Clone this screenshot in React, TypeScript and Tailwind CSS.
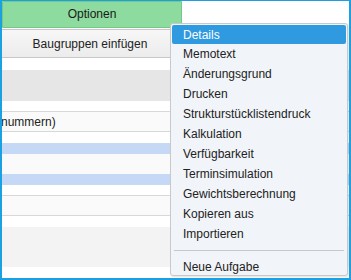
import React from "react";

const items = [
  "Memotext",
  "Änderungsgrund",
  "Drucken",
  "Strukturstücklistendruck",
  "Kalkulation",
  "Verfügbarkeit",
  "Terminsimulation",
  "Gewichtsberechnung",
  "Kopieren aus",
  "Importieren",
];

export default function App() {
  return (
    <div
      className="relative w-[351px] h-[280px] overflow-hidden bg-white border-x-2 border-b-2 border-t border-[#1ba1e2] text-[12px] text-[#222]"
      style={{ fontFamily: '"Liberation Sans", Arial, sans-serif' }}
    >
      <div className="flex flex-col w-[349px]">
        <div className="w-[180px] h-[27px] flex items-center justify-center pb-[1px] bg-[#8ddb9e] border border-[#74c987] rounded-br-sm text-[12px] text-[#1a1a1a]">
          Optionen
        </div>
        <div className="h-[29px] mt-[1px] flex items-center justify-center pr-[2px] w-[190px] bg-gradient-to-b from-[#f7f7f7] to-[#ececec] border-y border-[#c8c8c8] text-[12px]">
          <span className="-ml-[12px]">Baugruppen einfügen</span>
        </div>
        <div className="h-[12px] bg-white" />
        <div className="h-[31px] bg-[#e6e6e6]" />
        <div className="h-[11px] bg-white border-b border-[#d8d8d8]" />
        <div className="h-[20px] bg-[#fafafa] border-b border-[#d8d8d8] flex items-center -ml-[1px]">
          nummern)
        </div>
        <div className="h-[11px] bg-white" />
        <div className="h-[11px] bg-[#c5d8f6]" />
        <div className="h-[20px] bg-[#fafafa]" />
        <div className="h-[11px] bg-[#c5d8f6]" />
        <div className="h-[11px] bg-white border-b border-[#d8d8d8]" />
        <div className="h-[20px] bg-[#fafafa] border-b border-[#d8d8d8]" />
        <div className="h-[11px] bg-white" />
        <div className="h-[40px] bg-[#f3f3f3]" />
        <div className="flex-1 bg-white" />
      </div>

      <div className="absolute left-[168px] top-[22px] w-[178px] h-[253px] bg-[#f1f4f8] border border-[#c9c9c9] rounded-[3px] shadow-[1px_1px_2px_rgba(0,0,0,0.12)] pt-[1px] px-[1px]">
        <div className="h-[19px] flex items-center pl-[11px] bg-[#2f9ae0] text-white rounded-[2px]">
          Details
        </div>
        {items.map((t) => (
          <div key={t} className="h-[20px] flex items-center pl-[11px] pb-[1px]">
            {t}
          </div>
        ))}
        <div className="mx-[2px] my-[6px] border-t border-[#c8c8c8]" />
        <div className="h-[20px] flex items-center pl-[11px] pb-[1px]">Neue Aufgabe</div>
      </div>
    </div>
  );
}
